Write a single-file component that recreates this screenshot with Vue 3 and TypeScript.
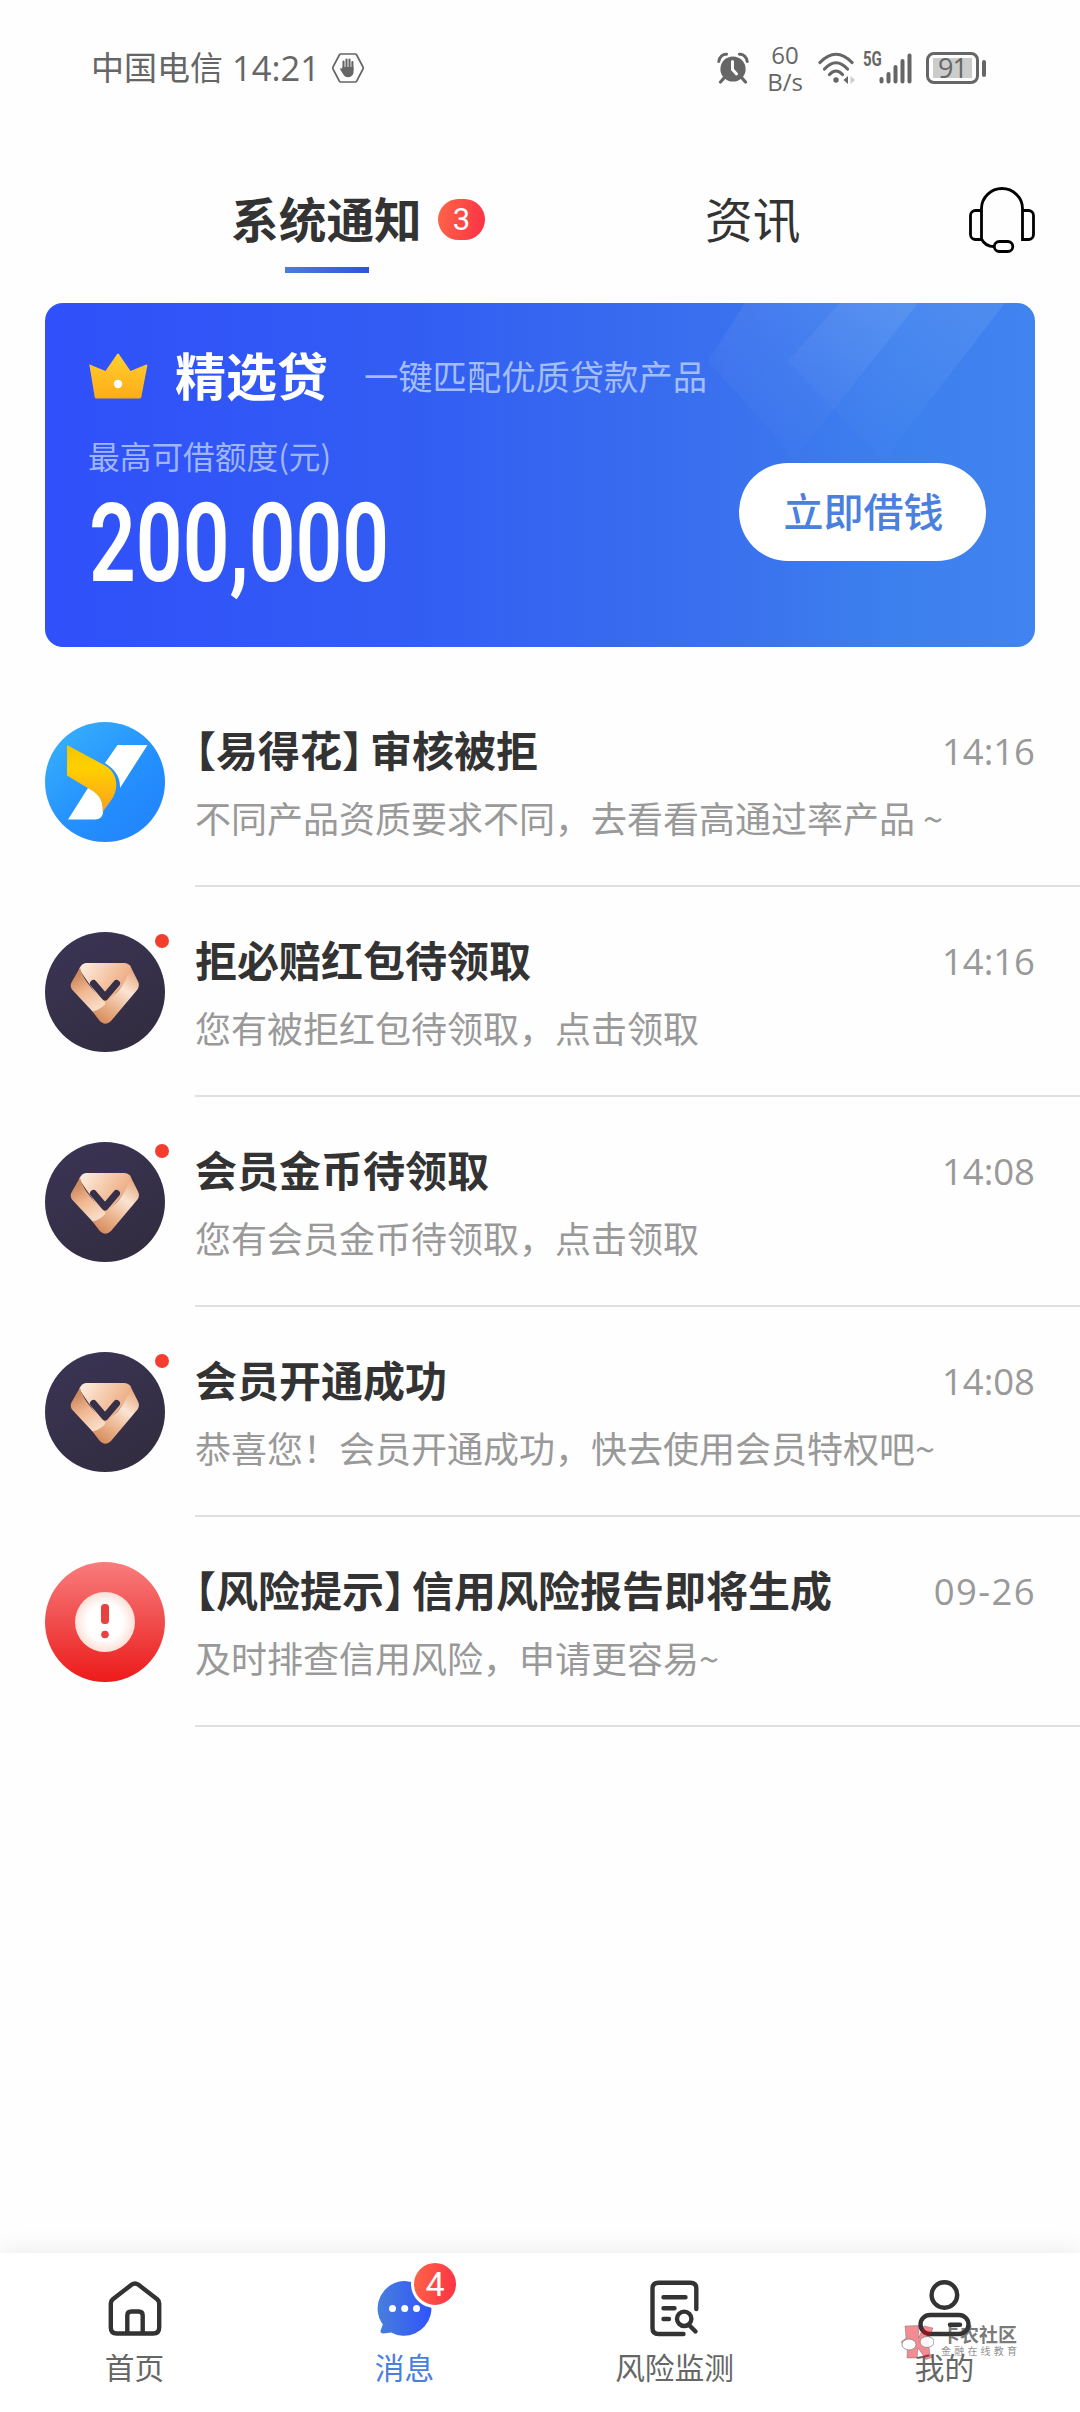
<script setup lang="ts">
interface TitlePart {
  text: string
  kind: 'open' | 'close' | 'text'
}

interface Message {
  icon: 'brand' | 'vip' | 'risk'
  title: TitlePart[]
  detail: string
  time: string
  unread: boolean
}

interface TabItem {
  key: 'home' | 'message' | 'monitor' | 'mine'
  label: string
  badge?: number
}

const plain = (text: string): TitlePart[] => [{ text, kind: 'text' }]
const tagged = (tag: string, text: string): TitlePart[] => [
  { text: '【', kind: 'open' },
  { text: tag, kind: 'text' },
  { text: '】', kind: 'close' },
  { text, kind: 'text' },
]

const messages: Message[] = [
  { icon: 'brand', title: tagged('易得花', '审核被拒'), detail: '不同产品资质要求不同，去看看高通过率产品 ~', time: '14:16', unread: false },
  { icon: 'vip', title: plain('拒必赔红包待领取'), detail: '您有被拒红包待领取，点击领取', time: '14:16', unread: true },
  { icon: 'vip', title: plain('会员金币待领取'), detail: '您有会员金币待领取，点击领取', time: '14:08', unread: true },
  { icon: 'vip', title: plain('会员开通成功'), detail: '恭喜您！会员开通成功，快去使用会员特权吧~', time: '14:08', unread: true },
  { icon: 'risk', title: tagged('风险提示', '信用风险报告即将生成'), detail: '及时排查信用风险，申请更容易~', time: '09-26', unread: false },
]

const tabs: TabItem[] = [
  { key: 'home', label: '首页' },
  { key: 'message', label: '消息', badge: 4 },
  { key: 'monitor', label: '风险监测' },
  { key: 'mine', label: '我的' },
]
const activeTab = 'message'
</script>

<template>
  <div class="screen">
    <svg class="defs" width="0" height="0" aria-hidden="true">
      <defs>
        <linearGradient id="brandBg" x1="0.1" y1="0.1" x2="0.8" y2="0.9">
          <stop offset="0" stop-color="#36aefc" />
          <stop offset="0.6" stop-color="#2490fe" />
          <stop offset="1" stop-color="#2286fc" />
        </linearGradient>
        <linearGradient id="brandGold" x1="0" y1="0" x2="0" y2="1">
          <stop offset="0" stop-color="#f3c400" />
          <stop offset="0.35" stop-color="#ffd000" />
          <stop offset="1" stop-color="#f9a01c" />
        </linearGradient>
        <linearGradient id="vipBg" x1="0" y1="0" x2="0.6" y2="1">
          <stop offset="0" stop-color="#3b3557" />
          <stop offset="1" stop-color="#322d40" />
        </linearGradient>
        <linearGradient id="vipTop" gradientUnits="userSpaceOnUse" x1="40" y1="31" x2="84" y2="60">
          <stop offset="0" stop-color="#fdeadb" />
          <stop offset="0.6" stop-color="#f2bf9c" />
          <stop offset="1" stop-color="#e9a379" />
        </linearGradient>
        <linearGradient id="vipLeft" gradientUnits="userSpaceOnUse" x1="36" y1="42" x2="56" y2="80">
          <stop offset="0" stop-color="#d08a60" />
          <stop offset="0.4" stop-color="#f0b892" />
          <stop offset="1" stop-color="#fbe6d5" />
        </linearGradient>
        <linearGradient id="vipRight" gradientUnits="userSpaceOnUse" x1="90" y1="38" x2="54" y2="90">
          <stop offset="0" stop-color="#e6a57d" />
          <stop offset="0.35" stop-color="#fbe4d3" />
          <stop offset="0.7" stop-color="#eab28a" />
          <stop offset="1" stop-color="#d58a5c" />
        </linearGradient>
        <linearGradient id="riskBg" x1="0" y1="0" x2="0" y2="1">
          <stop offset="0" stop-color="#fa7c7c" />
          <stop offset="0.5" stop-color="#f04c4c" />
          <stop offset="1" stop-color="#ee1a1a" />
        </linearGradient>
        <radialGradient id="riskDisc">
          <stop offset="0.6" stop-color="#ffffff" />
          <stop offset="1" stop-color="#fcdfd6" />
        </radialGradient>
        <linearGradient id="crownGold" x1="0" y1="0" x2="0" y2="1">
          <stop offset="0" stop-color="#ffd030" />
          <stop offset="1" stop-color="#ffac16" />
        </linearGradient>
        <linearGradient id="chatBlue" x1="0" y1="0" x2="1" y2="0">
          <stop offset="0" stop-color="#477fdc" />
          <stop offset="1" stop-color="#3054fa" />
        </linearGradient>
        <linearGradient id="ray" x1="0.8" y1="0" x2="0.35" y2="1">
          <stop offset="0" stop-color="#fff" stop-opacity="0.075" />
          <stop offset="1" stop-color="#fff" stop-opacity="0.005" />
        </linearGradient>
      </defs>
    </svg>

    <header class="status">
      <span class="carrier">中国电信</span>
      <span class="clock">14:21</span>
      <svg class="hex" width="34" height="32" viewBox="0 0 34 32">
        <path d="M10 2h14a2 2 0 0 1 1.700 1L32 15a2 2 0 0 1 0 2l-6.300 12a2 2 0 0 1-1.700 1H10a2 2 0 0 1-1.700-1L2 17a2 2 0 0 1 0-2L8.300 3A2 2 0 0 1 10 2z" fill="none" stroke="#666" stroke-width="1.700" />
        <path d="M12.500 18V9.500M15.500 17V7.500M18.500 17V7.500M21.400 18V10" stroke="#666" stroke-width="2.100" stroke-linecap="round" />
        <path d="M11.400 15h11.100v5.500a5 5 0 0 1-5 4.700c-3 0-4.200-1.200-5.300-3l-3-4.600c-.6-1.300 1-2 1.900-.9z" fill="#666" />
      </svg>
      <div class="status-right">
        <svg width="32" height="32" viewBox="0 0 32 32">
          <circle cx="16" cy="17" r="12.600" fill="#666" />
          <path d="M1.800 9.500C2 5 6 1.800 9.600 2.200M30.200 9.500C30 5 26 1.800 22.400 2.200" fill="none" stroke="#666" stroke-width="3" stroke-linecap="round" />
          <path d="M7 26l-3.500 4M25 26l3.500 4" stroke="#666" stroke-width="3.200" stroke-linecap="round" />
          <path d="M15.500 9.500V17.500l4 4.500" fill="none" stroke="#fff" stroke-width="3" stroke-linecap="round" stroke-linejoin="round" />
        </svg>
        <div class="speed"><span>60</span><span>B/s</span></div>
        <svg class="wifi" width="38" height="32" viewBox="0 0 38 32">
          <g fill="none" stroke="#666" stroke-width="3.200" stroke-linecap="round">
            <path d="M2 10.500Q18 -6 34 10.500" />
            <path d="M6.500 17Q18 4.500 29.500 17" />
            <path d="M11.500 22.500Q18 15.500 24.500 22.500" />
          </g>
          <circle cx="18" cy="28" r="2.700" fill="#666" />
          <path d="M25.500 28l4.500-4v8z" fill="#666" />
          <path d="M37 28l-4.500-4v8z" fill="#ccc" />
        </svg>
        <span class="net">5G</span>
        <svg class="signal" width="33" height="32" viewBox="0 0 33 32">
          <g stroke="#666" stroke-width="4" stroke-linecap="round">
            <path d="M2.500 27v2.500M9.500 22v7.500M16.500 15v14.500M23.500 9v20.500M30.500 3.500v26" />
          </g>
        </svg>
        <div class="battery"><span>91</span></div>
        <i class="nub"></i>
      </div>
    </header>

    <nav class="tabs">
      <div class="tab tab-on">系统通知</div>
      <span class="count">3</span>
      <div class="tab tab-off">资讯</div>
      <svg class="headset" width="66" height="66" viewBox="0 0 66 66">
        <g fill="none" stroke="#000" stroke-width="2.800">
          <path d="M12.500 52.500H6.500a5 5 0 0 1-5-5V28.500a5 5 0 0 1 5-5h6M12.500 52.500V21.500C12.500 10.500 22 1.500 33 1.500S53.500 10.500 53.500 21.500V52.500h6a5 5 0 0 0 5-5V28.500a5 5 0 0 0-5-5h-6" />
          <path d="M12.500 52c2.500 5 6 7.600 12.500 7.600" />
          <rect x="25.300" y="54.500" width="18.500" height="10" rx="5" />
        </g>
      </svg>
    </nav>

    <section class="banner">
      <svg class="rays" width="990" height="344" viewBox="0 0 990 344">
        <path d="M700 0H873L750 155L663 58z" fill="url(#ray)" />
        <path d="M795 0H960L838 158L743 58z" fill="url(#ray)" />
      </svg>
      <div class="offer">
        <div class="offer-head">
          <svg width="60" height="46" viewBox="0 0 60 46">
            <path d="M1.500 12.500Q.3 11 2.200 11.800L17.500 18L29 1.200Q30 0 31 1.200L42.500 18L57.800 11.800Q59.700 11 59.300 12.800L53.300 44Q53 45.600 51.500 45.600H8.500Q7 45.600 6.700 44z" fill="url(#crownGold)" />
            <circle cx="30" cy="31" r="4.200" fill="#fff" />
          </svg>
          <span class="offer-name">精选贷</span>
          <span class="offer-slogan">一键匹配优质贷款产品</span>
        </div>
        <div class="offer-label">最高可借额度(元)</div>
        <div class="offer-amount">200,000</div>
      </div>
      <button class="borrow">立即借钱</button>
    </section>

    <main class="list">
      <article v-for="(m, i) in messages" :key="i" class="row">
        <div class="avatar">
          <svg v-if="m.icon === 'brand'" width="120" height="120" viewBox="0 0 120 120">
            <circle cx="60" cy="60" r="60" fill="url(#brandBg)" />
            <path d="M72.500 23H102.500L75 66C75.500 54 69 47 60 41z" fill="#fff" />
            <path d="M43 66L23 97.500H50C56 97.500 59 93 58 86C57 76 52 69 43 66z" fill="#fff" />
            <path d="M22 23L60 43.500C73 51 74 66 67 77L57.500 90C58.500 80 55 73 46 68L22 53.500z" fill="url(#brandGold)" />
          </svg>
          <svg v-else-if="m.icon === 'vip'" width="120" height="120" viewBox="0 0 120 120">
            <circle cx="60" cy="60" r="60" fill="url(#vipBg)" />
            <path d="M41 31H79Q83.500 31 86 35L87 42L62 72H58L34 37Q37 31 41 31z" fill="url(#vipTop)" />
            <path d="M35 35.500Q38 50 60 70L62 78L48 80L27 57.500Q24.500 53.500 27 49.500z" fill="url(#vipLeft)" />
            <path d="M85.500 34.500L93 49.500Q95 53.500 92.500 57.500L66 89Q60 95 54 88L47.500 79.500Q58 77 64 67Q80 56 85.500 34.500z" fill="url(#vipRight)" />
            <path d="M48.500 51.500L60 65L71.500 51.500" fill="none" stroke="#353048" stroke-width="7" stroke-linecap="round" stroke-linejoin="round" />
          </svg>
          <svg v-else width="120" height="120" viewBox="0 0 120 120">
            <circle cx="60" cy="60" r="60" fill="url(#riskBg)" />
            <circle cx="60" cy="60" r="30" fill="url(#riskDisc)" />
            <rect x="56" y="42" width="8" height="20" rx="3.500" fill="#e84240" />
            <circle cx="60" cy="72.500" r="3.800" fill="#e84240" />
          </svg>
          <i v-if="m.unread" class="dot"></i>
        </div>
        <div class="body">
          <div class="line">
            <h3 class="title"><span v-for="(p, n) in m.title" :key="n" :class="p.kind">{{ p.text }}</span></h3>
            <time class="time" :class="{ date: m.time.includes('-') }">{{ m.time }}</time>
          </div>
          <p class="detail">{{ m.detail }}</p>
        </div>
      </article>
    </main>

    <footer class="bar">
      <div v-for="t in tabs" :key="t.key" class="item" :class="{ active: t.key === activeTab }">
        <div class="glyph">
          <svg v-if="t.key === 'home'" width="56" height="58" viewBox="0 0 56 58" fill="none" stroke="#333" stroke-width="4.400" stroke-linejoin="round">
            <path d="M3.800 23.500Q3.800 21 5.800 19.300L24.800 4.600Q28 2.200 31.200 4.600L50.200 19.300Q52.200 21 52.200 23.500V47.500Q52.200 53.500 46.200 53.500H9.800Q3.800 53.500 3.800 47.500z" />
            <path d="M20.300 53V35.500Q20.300 31.500 24.300 31.500H31.700Q35.700 31.500 35.700 35.500V53" />
          </svg>
          <svg v-else-if="t.key === 'message'" width="56" height="58" viewBox="0 0 56 58">
            <path d="M28 1A27.400 27.400 0 1 1 14 52.500L6.500 53.500Q3 53.500 3.600 50.500L5.800 44.500A27.400 27.400 0 0 1 28 1z" fill="url(#chatBlue)" />
            <g fill="#fff">
              <circle cx="15.500" cy="28.500" r="3.500" /><circle cx="27.700" cy="28.500" r="3.500" /><circle cx="39.500" cy="28.500" r="3.500" />
            </g>
          </svg>
          <svg v-else-if="t.key === 'monitor'" width="56" height="58" viewBox="0 0 56 58" fill="none" stroke="#333" stroke-width="4.400" stroke-linecap="round">
            <path d="M36.500 54H11.500Q5.500 54 5.500 48V8.500Q5.500 2.700 11.500 2.700H43.500Q49.300 2.700 49.300 8.500V29" />
            <path d="M16.500 17.200H38.500M16.500 28.200H27.500M16.500 39H22" />
            <circle cx="37.200" cy="38.800" r="7.200" />
            <path d="M42.500 45.500L48.500 51.500" />
          </svg>
          <svg v-else width="56" height="58" viewBox="0 0 56 58" fill="none" stroke="#333" stroke-width="4.400" stroke-linecap="round">
            <circle cx="27.400" cy="15" r="12.800" />
            <rect x="3.500" y="35" width="48" height="19" rx="9.500" />
            <path d="M33 44.800H43" />
          </svg>
          <b v-if="t.badge" class="badge">{{ t.badge }}</b>
        </div>
        <span class="label">{{ t.label }}</span>
      </div>
      <div class="mark">
        <svg width="34" height="36" viewBox="0 0 34 36">
          <path d="M5 2L19 1.500L18.500 14L24 2L33 4L28 17L30 30L33 33L26 35.500L18 24L17 34H7L7.500 22L1 18L6 14z" fill="#e60012" fill-opacity="0.5" stroke="#444" stroke-opacity="0.45" stroke-width="0.8" />
          <ellipse cx="9" cy="20.500" rx="7" ry="5.500" fill="#fff" stroke="#777" stroke-width="0.800" />
          <ellipse cx="27" cy="18" rx="7" ry="5.500" fill="#fff" fill-opacity="0.9" stroke="#777" stroke-width="0.800" />
        </svg>
        <div class="mark-text">
          <span class="mark-name">卡农社区</span>
          <span class="mark-sub">金融在线教育</span>
        </div>
      </div>
    </footer>
  </div>
</template>

<style>
body {
  margin: 0;
  background: #fefefe;
}
</style>

<style scoped>
.screen {
  width: 1080px;
  height: 2412px;
  display: flex;
  flex-direction: column;
  overflow: hidden;
  background: #fefefe;
  color: #333;
  font-family: "Noto Sans CJK SC", sans-serif;
}
.defs { position: absolute; }
svg { display: block; flex: none; }

.status {
  flex: none;
  height: 136px;
  padding: 0 94px 0 91px;
  box-sizing: border-box;
  display: flex;
  align-items: center;
  color: #666;
}
.carrier { font-size: 33px; line-height: 48px; margin-top: -4px; }
.clock { font: 500 34.500px/48px "Open Sans", sans-serif; margin: -1px 0 0 9px; width: 88px; white-space: nowrap; }
.hex { margin-left: 11px; }
.status-right { margin-left: auto; display: flex; align-items: center; }
.speed {
  width: 50px;
  margin-left: 11px;
  display: flex;
  flex-direction: column;
  align-items: center;
  font: 400 24px/27px "Open Sans", sans-serif;
}
.wifi { margin-left: 8px; }
.net { font: 700 20px/20px Roboto, sans-serif; transform: scaleX(0.75); width: 24px; margin: -18px -5px 0 4px; }
.signal { margin-left: 0; }
.battery {
  width: 53px;
  height: 32px;
  margin-left: 14px;
  padding: 3px 4px;
  box-sizing: border-box;
  border: 3px solid #666;
  border-radius: 8px;
  display: flex;
}
.battery span {
  flex: 1;
  background: #ccc;
  font: 500 27px/20px "Open Sans", sans-serif;
  text-align: center;
  letter-spacing: -1px;
}
.nub { width: 4px; height: 17px; margin-left: 3px; border-radius: 2px; background: #666; }

.tabs {
  flex: none;
  height: 167px;
  padding: 0 45px 0 231px;
  display: flex;
  align-items: center;
}
.tab { font-size: 47.700px; line-height: 70px; margin-top: -4px; white-space: nowrap; }
.tab-on { position: relative; font-weight: 700; width: 191px; }
.tab-on::after {
  content: "";
  position: absolute;
  left: 54px;
  top: 84px;
  width: 84px;
  height: 6px;
  background: linear-gradient(90deg, #477fdc, #3054d8);
}
.count {
  width: 47px;
  height: 41px;
  margin-left: 16px;
  border-radius: 21px;
  background: linear-gradient(100deg, #ff6648, #fb3045);
  color: #fff;
  font: 400 31px/42px Roboto, sans-serif;
  text-align: center;
}
.tab-off { margin-left: 220px; }
.headset { margin-left: auto; }

.banner {
  flex: none;
  position: relative;
  height: 344px;
  margin: 0 45px;
  padding: 0 49px 0 43px;
  box-sizing: border-box;
  border-radius: 18px;
  overflow: hidden;
  display: flex;
  justify-content: space-between;
  background: linear-gradient(90deg, #3050fb 0%, #325cf3 35%, #3a70ee 68%, #3c80ee 86%, #4183ef 100%);
  color: #fff;
}
.rays { position: absolute; left: 0; top: 0; }
.offer { padding-top: 36px; }
.offer-head { display: flex; align-items: center; height: 74px; white-space: nowrap; }
.offer-name { font-size: 51px; line-height: 74px; font-weight: 700; margin: -5px 0 0 27px; }
.offer-slogan { font-size: 34.300px; line-height: 50px; font-weight: 400; margin: -3px 0 0 36px; color: #a3bdf9; }
.offer-label { font-size: 31.700px; line-height: 46px; font-weight: 400; margin-top: 19px; color: #9fb5fa; }
.offer-amount {
  width: 400px;
  font: 600 110px/110px Roboto, sans-serif;
  transform: scaleX(0.745);
  transform-origin: 0 0;
  margin: 11px 0 0 1px;
}
.borrow {
  align-self: flex-start;
  position: relative;
  width: 247px;
  height: 98px;
  margin: 160px 0 0;
  padding: 0 0 4px 2px;
  border: 0;
  border-radius: 49px;
  background: #fff;
  color: #4a80de;
  font: 500 40px/94px "Noto Sans CJK SC", sans-serif;
}

.list { flex: 1; padding-top: 30px; }
.row { height: 210px; display: flex; padding-left: 45px; }
.avatar { position: relative; width: 120px; height: 120px; margin-top: 45px; flex: none; }
.dot {
  position: absolute;
  left: 110px;
  top: 2px;
  width: 14px;
  height: 14px;
  border-radius: 50%;
  background: #f33d2e;
}
.body { flex: 1; margin-left: 30px; padding-top: 42px; border-bottom: 2px solid #e0e0e0; }
.line { display: flex; justify-content: space-between; padding-right: 45px; }
.title { margin: 0; font-size: 42px; line-height: 60px; font-weight: 700; white-space: nowrap; }
.open, .close { font-feature-settings: "halt"; }
.close { margin-right: 7px; }
.time { font: 400 36.500px/64px "Open Sans", sans-serif; color: #999; }
.date { letter-spacing: 1.400px; margin-right: -1px; }
.detail { margin: 10px 0 0; font-size: 36px; line-height: 48px; color: #999; white-space: nowrap; }

.bar {
  position: relative;
  flex: none;
  height: 159px;
  display: flex;
  background: #fff;
  box-shadow: 0 -2px 24px rgba(0, 0, 0, 0.08);
}
.item { width: 270px; display: flex; flex-direction: column; align-items: center; padding-top: 27px; }
.glyph { position: relative; }
.badge {
  position: absolute;
  left: 34px;
  top: -20px;
  width: 42px;
  height: 42px;
  border: 3px solid #fff;
  border-radius: 50%;
  background: linear-gradient(100deg, #ff6648, #fb3045);
  color: #fff;
  font: 400 34px/43px Roboto, sans-serif;
  text-align: center;
}
.label { font-size: 29.700px; line-height: 44px; margin: 7px 1px 0 0; color: #666; }
.active .label { color: #477fdc; }
.mark { position: absolute; left: 900px; top: 71px; display: flex; opacity: 0.9; }
.mark-text { display: flex; flex-direction: column; margin-left: 7px; color: rgba(60, 60, 60, 0.75); white-space: nowrap; }
.mark-name { font-size: 19px; line-height: 20px; font-weight: 700; margin-top: 0; }
.mark-sub { font-size: 10px; line-height: 12px; letter-spacing: 3.200px; margin-top: 1px; color: rgba(100, 100, 100, 0.8); }
</style>
